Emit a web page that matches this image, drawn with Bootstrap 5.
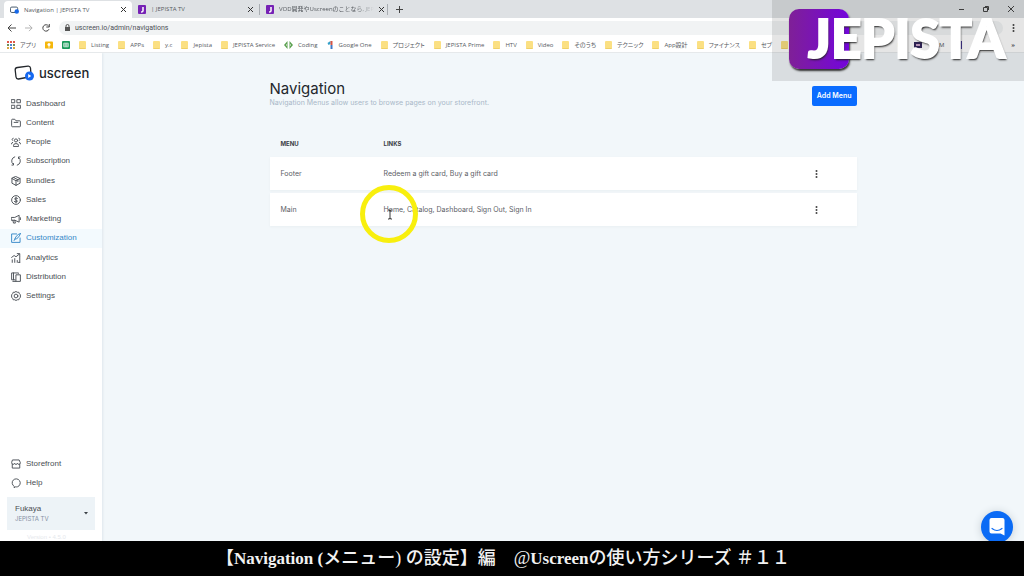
<!DOCTYPE html>
<html lang="ja">
<head>
<meta charset="utf-8">
<meta name="viewport" content="width=device-width, initial-scale=1">
<title>Navigation | JEPISTA TV</title>
<link href="https://cdn.jsdelivr.net/npm/bootstrap@5.3.0/dist/css/bootstrap.min.css" rel="stylesheet">
<style>
  body{font-family:Inter,"Noto Sans CJK JP",sans-serif;font-size:7px;line-height:10px;color:#4a4f55;background:#f2f7fa}
  a{color:inherit;text-decoration:none}
  button{border:0;background:none;padding:0;color:inherit;line-height:1}
  svg{display:block;flex:none}
  .ico{fill:none;stroke:currentColor;stroke-width:1.5;stroke-linecap:round;stroke-linejoin:round}
  .browser{font-family:"Open Sans","Noto Sans CJK JP",sans-serif;font-size:6px;color:#55595e;background:#fff;border-bottom:1px solid #e6e9eb}
  .tabstrip{background:#dee1e4;height:18px;padding-left:4px}
  .btab{width:128px;height:17px;padding:0 6px;gap:5px}
  .btab + .btab{border-right:1px solid #a9adb2;height:11px}
  .btab.current{background:#fff;border-radius:4px 4px 0 0}
  .btab span{flex:1;white-space:nowrap}
  .btab .fade-end{-webkit-mask-image:linear-gradient(90deg,#000 80%,transparent);mask-image:linear-gradient(90deg,#000 80%,transparent)}
  .win-controls{gap:19px;padding-right:10px}
  .toolbar{height:19px;padding:0 9px 0 7px;gap:9px}
  .omnibox{background:#f1f3f4;border-radius:7px;height:14px;padding-left:6px;gap:5px}
  .omnibox input{border:0;background:none;outline:0;padding:0;font:7px/14px Roboto,sans-serif;color:#4d5156}
  .marks{height:15px;padding:0 9px 0 7px;gap:9px;white-space:nowrap;font-feature-settings:"palt"}
  .marks a{display:flex;align-items:center;gap:5px}
  .folder{width:7px;height:8px;background:#fbe083;border-bottom:1px solid #efd067;border-radius:1px}
  .side{width:102px;background:#fff;box-shadow:1px 0 2px #dfe7ec;z-index:1;font-family:"Liberation Sans",sans-serif;font-size:8px}
  .brand{font-family:Inter,sans-serif;font-size:13px;line-height:14px;font-weight:500;color:#22262b;padding:12px 0 0 14px;gap:5px}
  .menu{min-height:212px;margin-top:13px}
  .menu a,.menu-end a{padding-left:11px;gap:5px;min-height:19px}
  .menu a.current{background:#f3fafe;color:#3488c8}
  .account{margin:5px 7px 0;padding:7px 7px 7px 8px;background:#edf3f7;text-align:left;line-height:10px}
  .account small{font-family:Inter,sans-serif;font-size:6px;line-height:9px;color:#8590a3}
  .version{color:#e6e9ed;font-size:6px;line-height:7px;padding-left:27px;margin-top:4px}
  .page{max-width:587px;padding-top:27px}
  h1{font-size:15px;line-height:18px;font-weight:400;color:#23272c;margin:0}
  .lede{color:#a9b7c8;line-height:10px}
  .btn-add{--bs-btn-bg:#0a6cff;--bs-btn-border-color:#0a6cff;--bs-btn-color:#fff;font-size:7px;line-height:10px;font-weight:600;padding:5px;border-radius:2px;margin-top:6px;border-width:0}
  .menus{width:100%;margin-top:23px;border-collapse:separate;border-spacing:0 3px;table-layout:fixed}
  .menus th{font-size:6px;font-weight:700;height:20px;color:#3b4046;padding:0 0 0 11px}
  .menus td{background:#fff;height:33px;padding:0 0 0 11px;color:#5b6066}
  .menus tbody tr{box-shadow:0 1px 2px #e9eff2}
  .menus .c-name{width:103px}.menus .c-act{width:57px}
  .ring{position:absolute;left:-13px;top:-8px;pointer-events:none}
  .chat{position:absolute;right:11px;bottom:-2px;width:32px;height:32px;border-radius:50%;background:#0b6bf5;box-shadow:0 1px 8px #c3ccd3}
  .watermark{position:absolute;right:0;top:0;width:252px;height:81px;background:rgba(0,0,0,.1)}
  .tile{position:absolute;left:17px;top:9px;width:60px;height:60px;border-radius:10px;background:linear-gradient(90deg,#7f2097,#7305dc);box-shadow:1px 2px 2px #333}
  .logotype{position:absolute;left:36px;top:8px;font:900 53px/60px Lato,sans-serif;color:#fff;-webkit-text-stroke:2px #fff;text-shadow:1px 2px 2px #222}
  .caption{background:#000;color:#f2f2f2;font:500 18px/35px "Liberation Serif","Noto Sans CJK JP",serif;white-space:pre;text-align:center;padding-right:18px;z-index:3}
  .caption b{font-size:17px}
</style>
</head>
<body>
<div class="d-flex flex-column vh-100 position-relative overflow-hidden">
  <header class="browser">
    <div class="tabstrip d-flex align-items-end">
      <div class="btab current d-flex align-items-center">
        <svg width="9" height="8" viewBox="0 0 20 17"><rect x="1" y="2" width="16" height="12" rx="3" fill="none" stroke="#34495e" stroke-width="2"/><circle cx="15" cy="12" r="5" fill="#1769e8"/></svg>
        <span>Navigation | JEPISTA TV</span><button aria-label="Close tab"><svg width="5" height="5" viewBox="0 0 5 5" stroke="#333"><path d="M0 0l5 5M5 0l-5 5"/></svg></button>
      </div>
      <div class="btab d-flex align-items-center align-self-center">
        <svg width="8" height="9" viewBox="0 0 8 9"><rect width="8" height="9" rx="1" fill="#7621b5"/><path d="M5 2v4q0 1-2 1" stroke="#fff" stroke-width="1.5" fill="none"/></svg>
        <span>| JEPISTA TV</span><button aria-label="Close tab"><svg width="5" height="5" viewBox="0 0 5 5" stroke="#333"><path d="M0 0l5 5M5 0l-5 5"/></svg></button>
      </div>
      <div class="btab d-flex align-items-center align-self-center">
        <svg width="8" height="9" viewBox="0 0 8 9"><rect width="8" height="9" rx="1" fill="#7621b5"/><path d="M5 2v4q0 1-2 1" stroke="#fff" stroke-width="1.5" fill="none"/></svg>
        <span class="fade-end">VOD開発やUscreenのことなら, JEP</span><button aria-label="Close tab"><svg width="5" height="5" viewBox="0 0 5 5" stroke="#333"><path d="M0 0l5 5M5 0l-5 5"/></svg></button>
      </div>
      <button class="align-self-center ms-2" aria-label="New tab"><svg width="7" height="7" viewBox="0 0 7 7" stroke="#444"><path d="M3.500 0v7M0 3.500h7"/></svg></button>
      <div class="win-controls d-flex align-items-center align-self-center ms-auto">
        <button aria-label="Minimize"><svg width="5" height="5" viewBox="0 0 5 5" stroke="#444"><path d="M0 2.500h5"/></svg></button>
        <button aria-label="Restore"><svg width="6" height="6" viewBox="0 0 6 6" stroke="#444" fill="none"><path d="M.5 1.500h4v4h-4zM2 .5h3.500v3.500"/></svg></button>
        <button aria-label="Close"><svg width="6" height="6" viewBox="0 0 6 6" stroke="#444"><path d="M0 0l6 6M6 0l-6 6"/></svg></button>
      </div>
    </div>
    <div class="toolbar d-flex align-items-center">
      <button aria-label="Back"><svg width="9" height="8" viewBox="0 0 9 8" fill="none" stroke="#444"><path d="M9 4H1M4.500 .5L1 4l3.500 3.500"/></svg></button>
      <button aria-label="Forward"><svg width="8" height="8" viewBox="0 0 9 8" fill="none" stroke="#aaa"><path d="M0 4h8M4.500 .5L8 4 4.500 7.500"/></svg></button>
      <button aria-label="Reload"><svg width="8" height="8" viewBox="0 0 8 8" fill="none" stroke="#444"><path d="M7 5.200A3.200 3.200 0 1 1 6.600 2M7.300 0v3h-3"/></svg></button>
      <div class="omnibox d-flex align-items-center flex-fill">
        <svg width="5" height="7" viewBox="0 0 5 7"><rect y="3" width="5" height="4" fill="#555"/><path d="M1 3V2a1.500 1.500 0 0 1 3 0v1" fill="none" stroke="#555"/></svg>
        <input class="flex-fill" aria-label="Address" value="uscreen.io/admin/navigations">
      </div>
      <button aria-label="Browser menu"><svg width="3" height="8" viewBox="0 0 3 8" fill="#444"><circle cx="1.500" cy="1" r="1"/><circle cx="1.500" cy="4" r="1"/><circle cx="1.500" cy="7" r="1"/></svg></button>
    </div>
    <nav class="marks d-flex align-items-center" aria-label="Bookmarks">
      <a href="#"><svg width="8" height="8" viewBox="0 0 8 8"><path fill="#e0564a" d="M0 0h2v2H0zM3 0h2v2H3zM6 0h2v2H6z"/><path fill="#6e8f5b" d="M0 3h2v2H0zM6 3h2v2H6z"/><path fill="#4b83d5" d="M3 3h2v2H3zM3 6h2v2H3z"/><path fill="#d9a640" d="M0 6h2v2H0zM6 6h2v2H6z"/></svg>アプリ</a>
      <a href="#" aria-label="Keep"><svg width="8" height="8" viewBox="0 0 9 8"><rect width="9" height="8" rx="1" fill="#f5b70b"/><circle cx="4.500" cy="3.500" r="1.700" fill="#fff"/><path d="M4 5h1v2H4z" fill="#fff"/></svg></a>
      <a href="#" aria-label="Sheets"><svg width="8" height="8" viewBox="0 0 9 9"><rect width="9" height="9" rx="1" fill="#199a5a"/><path d="M2 2.500h5v4H2zM2 4.500h5M4.500 2.500v4" stroke="#fff" stroke-width=".8" fill="none"/></svg></a>
      <a href="#"><i class="folder"></i>Listing</a>
      <a href="#"><i class="folder"></i>APPs</a>
      <a href="#"><i class="folder"></i>y.c</a>
      <a href="#"><i class="folder"></i>Jepista</a>
      <a href="#"><i class="folder"></i>JEPISTA Service</a>
      <a href="#"><svg width="9" height="8" viewBox="0 0 9 8" fill="#5aa04f"><path d="M3.500 0v8L0 4zM5.500 0v8L9 4z"/><path d="M3 3v2L2 4zM6 3v2l1-1z" fill="#fff"/></svg>Coding</a>
      <a href="#"><svg width="7" height="8" viewBox="0 0 6 8"><path d="M0 2l3-2v3L1 4z" fill="#34a0c9"/><path d="M3 0h2v4H3z" fill="#d95445"/><path d="M3 4h2v4H3z" fill="#3d78c6"/></svg>Google One</a>
      <a href="#"><i class="folder"></i>プロジェクト</a>
      <a href="#"><i class="folder"></i>JEPISTA Prime</a>
      <a href="#"><i class="folder"></i>HTV</a>
      <a href="#"><i class="folder"></i>Video</a>
      <a href="#"><i class="folder"></i>そのうち</a>
      <a href="#"><i class="folder"></i>テクニック</a>
      <a href="#"><i class="folder"></i>App設計</a>
      <a href="#"><i class="folder"></i>ファイナンス</a>
      <a href="#"><i class="folder"></i>セブ</a>
      <a href="#" aria-label="Folder"><i class="folder"></i></a>
      <a href="#" class="ms-auto me-1">F</a>
      <a href="#" class="me-2" aria-label="Saved page"><svg width="8" height="8" viewBox="0 0 8 8"><path d="M0 1h8v6H0z" fill="#33265c"/><path d="M2 3h4v2H2z" fill="#c9a3c9"/></svg></a>
      <a href="#" class="me-1">M</a>
      <a href="#" class="me-4" aria-label="Saved page"><svg width="5" height="8" viewBox="0 0 5 8"><path d="M0 0h5v8H0z" fill="#43359b"/></svg></a>
      <a href="#" class="ms-3 fw-bold">»</a>
    </nav>
  </header>

  <div class="d-flex flex-fill position-relative overflow-hidden">
    <aside class="side d-flex flex-column flex-shrink-0">
      <a href="#" class="brand d-flex align-items-center"><svg width="20" height="16" viewBox="0 0 20 16"><path d="M3.500 2.500L14 1.200q2.200-.2 2.500 2l.5 6q.2 2.300-2 2.800L4.500 14q-2.200.2-2.500-2L1.200 5Q1 2.800 3.500 2.500z" fill="none" stroke="#22262b" stroke-width="1.300"/><circle cx="15.500" cy="11" r="4.500" fill="#1769f0"/><path d="M14.200 9v4l3-2z" fill="#fff"/></svg>uscreen</a>
      <nav class="menu d-flex flex-column" aria-label="Admin">
        <a href="#" class="d-flex flex-fill align-items-center"><svg class="ico" width="10" height="10" viewBox="0 0 16 16"><path d="M1 1h5v5H1zM10 1h5v5h-5zM1 10h5v5H1zM10 10h5v5h-5z"/></svg>Dashboard</a>
        <a href="#" class="d-flex flex-fill align-items-center"><svg class="ico" width="10" height="10" viewBox="0 0 16 16"><path d="M1 3q0-1 1-1h4l2 2.500h6q1 0 1 1V13q0 1-1 1H2q-1 0-1-1zM5 7h6"/></svg>Content</a>
        <a href="#" class="d-flex flex-fill align-items-center"><svg class="ico" width="10" height="10" viewBox="0 0 16 16"><circle cx="8" cy="5.500" r="2.500"/><path d="M4 14.500v-1q0-3 4-3t4 3v1zM3.500 2a2 2 0 0 0-1 3.500M12.500 2a2 2 0 0 1 1 3.500M.7 11q0-2 2-2.500M15.300 11q0-2-2-2.500"/></svg>People</a>
        <a href="#" class="d-flex flex-fill align-items-center"><svg class="ico" width="10" height="10" viewBox="0 0 16 16"><path d="M6 1.300A7 7 0 0 0 3.500 13.300M1.500 14.500h2.500v-2.500M10 14.700A7 7 0 0 0 12.500 2.700M14.500 1.500h-2.500v2.500"/></svg>Subscription</a>
        <a href="#" class="d-flex flex-fill align-items-center"><svg class="ico" width="10" height="10" viewBox="0 0 16 16"><path d="M8 1l6.500 3v7.500L8 15l-6.500-3.500V4zM1.500 4L8 7.500 14.500 4M8 7.500V15M4.500 2.500L11 6v3"/></svg>Bundles</a>
        <a href="#" class="d-flex flex-fill align-items-center"><svg class="ico" width="10" height="10" viewBox="0 0 16 16"><circle cx="8" cy="8" r="7"/><path d="M10.300 5.500Q8 4 6.300 5.300 5 7 8 8t1.800 2.700Q8 12 5.500 10.500M8 3.500v9"/></svg>Sales</a>
        <a href="#" class="d-flex flex-fill align-items-center"><svg class="ico" width="10" height="10" viewBox="0 0 16 16"><path d="M1 5.500h5L13 2v11L6 10H1zM3 10l1 4.500h3L6 10M15 6v3"/></svg>Marketing</a>
        <a href="#" class="current d-flex flex-fill align-items-center" aria-current="page"><svg class="ico" width="10" height="10" viewBox="0 0 16 16"><path d="M9 1.500H1V15h13.500V8M15 1q-6 1-9 9l-1 2M6 10q6 0 9-9"/></svg>Customization</a>
        <a href="#" class="d-flex flex-fill align-items-center"><svg class="ico" width="10" height="10" viewBox="0 0 16 16"><path d="M2 15v-4M6 15V9M10 15v-3M14 15V6M1 7l4-3 3 2 5-4M10 1h4v4M12 15h2"/></svg>Analytics</a>
        <a href="#" class="d-flex flex-fill align-items-center"><svg class="ico" width="10" height="10" viewBox="0 0 16 16"><path d="M6.500 12.500H1V1.500h11V2M3 15h4.500M8.500 4.500H15V15H8.500zM4 1.500v11"/></svg>Distribution</a>
        <a href="#" class="d-flex flex-fill align-items-center"><svg class="ico" width="10" height="10" viewBox="0 0 16 16"><path d="M8 .8l2 1.200 2.500 0 1 2.500L15 6v4l-1.500 1.500-1 2.500H10l-2 1.200L6 14H3.500l-1-2.500L1 10V6l1.500-1.500 1-2.500H6z"/><circle cx="8" cy="8" r="3"/></svg>Settings</a>
      </nav>
      <nav class="menu-end mt-auto" aria-label="Support">
        <a href="#" class="d-flex align-items-center"><svg class="ico" width="10" height="10" viewBox="0 0 16 16"><path d="M3 1.500h10L15 6q0 2.500-2.300 2.500T10.300 7Q10 8.500 8 8.500T5.700 7q0 1.500-2.400 1.500T1 6zM2 8.500v6h12v-6"/></svg>Storefront</a>
        <a href="#" class="d-flex align-items-center"><svg class="ico" width="10" height="10" viewBox="0 0 16 16"><path d="M5 13.500A6.500 6.500 0 1 1 10.500 14Q9 14.500 7.500 14L5.500 15.500z"/></svg>Help</a>
      </nav>
      <button class="account d-flex align-items-center justify-content-between"><span><span class="d-block">Fukaya</span><small class="d-block">JEPISTA TV</small></span><svg width="4" height="3" viewBox="0 0 4 3"><path d="M0 0h4L2 2.500z" fill="#3b4046"/></svg></button>
      <div class="version">Version • 4.5.0</div>
    </aside>
    <main class="flex-fill">
      <div class="page mx-auto">
        <div class="d-flex justify-content-between align-items-start">
          <div><h1>Navigation</h1><div class="lede">Navigation Menus allow users to browse pages on your storefront.</div></div>
          <button class="btn btn-add">Add Menu</button>
        </div>
        <table class="menus">
          <thead><tr><th class="c-name">MENU</th><th>LINKS</th><th class="c-act"></th></tr></thead>
          <tbody>
            <tr><td>Footer</td><td>Redeem a gift card, Buy a gift card</td><td><button class="p-1" aria-label="Footer actions"><svg width="3" height="8" viewBox="0 0 3 8" fill="#444"><circle cx="1.500" cy="1" r="1"/><circle cx="1.500" cy="4" r="1"/><circle cx="1.500" cy="7" r="1"/></svg></button></td></tr>
            <tr><td>Main</td><td class="position-relative">Home, Catalog, Dashboard, Sign Out, Sign In
              <svg class="ring" width="58" height="58" viewBox="0 0 58 58" fill="none"><circle cx="29" cy="29" r="26.500" stroke="#f8ef0e" stroke-width="5"/><path d="M28 25h1.500l.5 1 .5-1H32M30 26v7M28 34h1.500l.5-1 .5 1H32" stroke="#222" stroke-width=".9"/></svg></td>
              <td><button class="p-1" aria-label="Main actions"><svg width="3" height="8" viewBox="0 0 3 8" fill="#444"><circle cx="1.500" cy="1" r="1"/><circle cx="1.500" cy="4" r="1"/><circle cx="1.500" cy="7" r="1"/></svg></button></td></tr>
          </tbody>
        </table>
      </div>
    </main>
    <button class="chat d-flex align-items-center justify-content-center" aria-label="Open chat"><svg width="16" height="18" viewBox="0 0 16 18"><path d="M2.500 0h11Q15.500 0 15.500 2v15.500L11.500 15.500h-9Q.5 15.500.5 13.500V2Q.5 0 2.500 0z" fill="#fff"/><path d="M3 10.500q5 4 10 0" fill="none" stroke="#0b6bf5" stroke-width="1.200" stroke-linecap="round"/></svg></button>
  </div>

  <div class="watermark"><div class="tile"></div><div class="logotype">JEPISTA</div></div>
  <footer class="caption">【<b>Navigation (</b>メニュー) の設定】編　@<b>Uscreen</b>の使い方シリーズ ＃１１</footer>
</div>
<script src="https://cdn.jsdelivr.net/npm/bootstrap@5.3.0/dist/js/bootstrap.bundle.min.js"></script>
</body>
</html>
